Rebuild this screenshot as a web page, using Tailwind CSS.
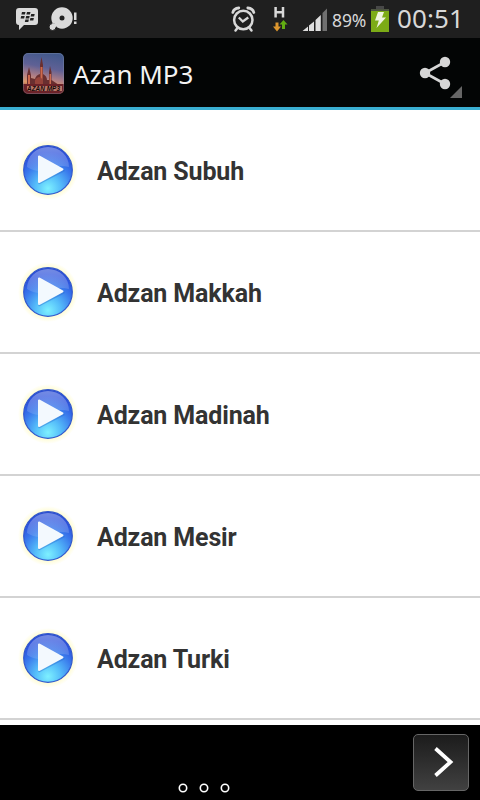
<!DOCTYPE html>
<html lang="id">
<head>
    <meta charset="UTF-8">
    <meta name="viewport" content="width=device-width, initial-scale=1.0">
    <title>Azan MP3</title>
    <script src="https://cdn.jsdelivr.net/npm/@tailwindcss/browser@4"></script>
</head>
<body class="bg-white font-['Roboto',sans-serif]">
    <!-- Shared play icon -->
    <svg class="absolute w-0 h-0" aria-hidden="true">
        <defs>
            <radialGradient id="ball" cx="0.5" cy="0.88" r="0.88">
                <stop offset="0" stop-color="#7df0ff" />
                <stop offset="0.3" stop-color="#55bdfa" />
                <stop offset="0.6" stop-color="#3a7aec" />
                <stop offset="0.85" stop-color="#2a50dc" />
                <stop offset="1" stop-color="#2a4bd0" />
            </radialGradient>
            <linearGradient id="gloss" x1="0" y1="0" x2="0" y2="1">
                <stop offset="0" stop-color="#fff" stop-opacity="0.35" />
                <stop offset="1" stop-color="#fff" stop-opacity="0.12" />
            </linearGradient>
            <radialGradient id="glow">
                <stop offset="0.8" stop-color="#fffccf" />
                <stop offset="1" stop-color="#fffccf" stop-opacity="0" />
            </radialGradient>
        </defs>
        <symbol id="play" viewBox="0 0 60 60">
            <circle cx="30" cy="30" r="30" fill="url(#glow)" />
            <circle cx="30" cy="30" r="24.3" fill="url(#ball)" stroke="#3358cc" stroke-width="1.2" />
            <path d="M9 27a21 20 0 0 1 42 0Q40 24 30 29T9 27z" fill="url(#gloss)" />
            <path d="M21 17v25L45 29.500z" transform="translate(.5 1)" fill="#2868cf" stroke="#2868cf" stroke-width="2.500" stroke-linejoin="round" opacity="0.4" />
            <path d="M21 16.500v25.500L44.500 29.300z" fill="#f3f9fe" stroke="#f3f9fe" stroke-width="2" stroke-linejoin="round" />
        </symbol>
    </svg>

    <div class="w-[480px] h-[800px] flex flex-col overflow-hidden">
        <!-- Status bar -->
        <div class="h-[38px] shrink-0 bg-[#1f1f1f] flex items-start text-[#d8d8d8] font-['Noto_Sans',sans-serif]">
            <svg class="ml-4 w-16 h-[38px]" viewBox="16 0 64 38" fill="#dadada">
                <path d="M19 8h16q3 0 3 3v11q0 3-3 3H24l-5 5v-5q-3 0-3-3V11q0-3 3-3z" />
                <g fill="#222">
                    <path d="M22 12h3.500l-.6 2.500h-3.500zM27 12h3.500l-.6 2.500h-3.500zM21.200 16h3.500l-.6 2.500h-3.500zM26.200 16h3.500l-.6 2.500h-3.500zM31.200 14h3.500l-.6 2.500h-3.500zM30.400 18h3.500l-.6 2.500h-3.500zM25.400 19.600h3.500l-.6 2.400h-3.500z" />
                </g>
                <circle cx="62" cy="18" r="10.700" />
                <circle cx="62" cy="18" r="2.500" fill="#222" />
                <circle cx="52.500" cy="27" r="3.500" stroke="#1f1f1f" stroke-width="1" />
                <path d="M52 23l6 1-3 4z" />
                <path d="M74 12.500h2.500v7.500H74zM74 21.500h2.500V24H74z" />
            </svg>
            <svg class="ml-[150px] w-[100px] h-[38px]" viewBox="230 0 100 38">
                <g fill="none" stroke="#d8d8d8" stroke-linecap="round">
                    <circle cx="243.300" cy="20" r="9.200" stroke-width="2.500" />
                    <path d="M238.800 17.500l4 4 5.500-4" stroke-width="2.300" stroke-linecap="butt" />
                    <path d="M232.800 12.500q1-4 6-4.500M253.800 12.500q-1-4-6-4.500" stroke-width="2.800" />
                    <path d="M237.500 28l-2 2.500M249.500 28l2 2.500" stroke-width="2.500" />
                </g>
                <path d="M275.600 7v10.500M283 7v10.500M275.600 12.200h7.400" stroke="#d8d8d8" stroke-width="2.500" />
                <path d="M275.500 22.500h3v4h2.500l-4 5-4-5h2.500z" fill="#dc962e" />
                <path d="M282 29v-4.500h-2.500l4-4.500 4 4.500H285V29z" fill="#62ac12" />
                <g fill="#dedede">
                    <path d="M302.500 31l5.500-4.500V31zM309 25.500l5-4V31h-5zM315.500 20l5.300-5V31h-5.300z" />
                    <path d="M322.500 13l4.500-4.500V31h-4.500z" fill="#707070" />
                </g>
            </svg>
            <div class="ml-0.5 w-9 h-[38px] leading-[40px] text-[17.5px] tracking-[-0.1px]">89%</div>
            <svg class="ml-[3px] w-[18px] h-[38px]" viewBox="371 0 18 38">
                <path d="M376 6h8v3h-8z" fill="#484848" />
                <path d="M371 9h18v3h-18z" fill="#4d5540" />
                <path d="M371 11h18v21h-18z" fill="#7cab16" />
                <path d="M378 12h6l-2 5.500h4L376.500 28l2.300-7.500H375z" fill="#eef3df" />
            </svg>
            <div class="ml-2 h-[38px] leading-[37px] text-[26px] tracking-[0.1px] whitespace-nowrap">00:51</div>
        </div>

        <!-- Action bar -->
        <div class="h-[72px] shrink-0 bg-[#030505] border-b-[3px] border-[#3aafd2] flex items-center">
            <svg class="ml-[23px] mt-[2px] w-[41px] h-[41px] shrink-0" viewBox="0 0 41 41">
                <defs>
                    <linearGradient id="sky" x1="0.6" y1="0" x2="0.4" y2="1">
                        <stop offset="0" stop-color="#42598c" />
                        <stop offset="0.35" stop-color="#5f6195" />
                        <stop offset="0.6" stop-color="#b07f86" />
                        <stop offset="0.78" stop-color="#df9868" />
                        <stop offset="1" stop-color="#5d2025" />
                    </linearGradient>
                    <clipPath id="tile"><rect width="41" height="41" rx="5" /></clipPath>
                </defs>
                <g clip-path="url(#tile)">
                    <rect width="41" height="41" fill="url(#sky)" />
                    <path d="M4 34V22l2-8 2 8v3l4 1q1-4 5-5v-9l1.500-8 1.500 8v9q4 2 4 6h2V19l1-6 1.500 6v8l6 4v3H3z" fill="#692f30" />
                    <path d="M5 22h2v10H5zM17.500 14h2v14h-2zM26.500 21h1.500v10h-1.500z" fill="#cf6a4d" />
                    <path d="M12 27q4-6 8 0v5h-8z" fill="#96433a" />
                    <path d="M0 31h41v10H0z" fill="#6b2228" />
                    <path d="M4 33h35v5H4z" fill="#b87768" />
                    <text x="4" y="38" textLength="33" lengthAdjust="spacingAndGlyphs" fill="#160909" font-family="Liberation Sans" font-size="7" font-weight="bold" font-style="italic">AZAN MP3</text>
                </g>
                <rect x="0.500" y="0.500" width="40" height="40" rx="5" fill="none" stroke="#8998b0" stroke-opacity="0.350" />
            </svg>
            <h1 class="ml-[9px] mt-[3px] text-[26px] leading-9 text-[#f3f3f3] whitespace-nowrap font-['Noto_Sans',sans-serif]">Azan MP3</h1>
            <svg class="ml-auto mr-[17px] w-[45px] h-[46px] mt-[9px]" viewBox="418 54 45 46">
                <path d="M445 62l-20 11 20 11" fill="none" stroke="#d6d6d6" stroke-width="2.600" />
                <g fill="#d6d6d6">
                    <circle cx="445" cy="62" r="5.200" />
                    <circle cx="425" cy="73" r="5.200" />
                    <circle cx="445" cy="84" r="5.200" />
                </g>
                <path d="M462 86v12h-12z" fill="#666" />
            </svg>
        </div>

        <!-- Track list -->
        <ul class="h-[615px] shrink-0 overflow-hidden bg-white text-[25px] tracking-[-0.15px] font-bold text-[#333]">
            <li class="h-[122px] flex items-center border-b-2 border-[#d3d3d3] pl-[18px]">
                <svg class="w-[60px] h-[60px]"><use href="#play" /></svg>
                <span class="ml-[19px] mt-1">Adzan Subuh</span>
            </li>
            <li class="h-[122px] flex items-center border-b-2 border-[#d3d3d3] pl-[18px]">
                <svg class="w-[60px] h-[60px]"><use href="#play" /></svg>
                <span class="ml-[19px] mt-1">Adzan Makkah</span>
            </li>
            <li class="h-[122px] flex items-center border-b-2 border-[#d3d3d3] pl-[18px]">
                <svg class="w-[60px] h-[60px]"><use href="#play" /></svg>
                <span class="ml-[19px] mt-1">Adzan Madinah</span>
            </li>
            <li class="h-[122px] flex items-center border-b-2 border-[#d3d3d3] pl-[18px]">
                <svg class="w-[60px] h-[60px]"><use href="#play" /></svg>
                <span class="ml-[19px] mt-1">Adzan Mesir</span>
            </li>
            <li class="h-[122px] flex items-center border-b-2 border-[#d3d3d3] pl-[18px]">
                <svg class="w-[60px] h-[60px]"><use href="#play" /></svg>
                <span class="ml-[19px] mt-1">Adzan Turki</span>
            </li>
        </ul>

        <!-- Ad banner -->
        <div class="h-[75px] shrink-0 bg-black flex items-start">
            <svg class="ml-[176px] mt-[56px] w-14 h-[14px]" viewBox="176 781 56 14" fill="none" stroke="#fff" stroke-width="1.600">
                <circle cx="183" cy="788" r="3.700" />
                <circle cx="204" cy="788" r="3.700" />
                <circle cx="225" cy="788" r="3.700" />
            </svg>
            <button class="ml-auto mr-[11px] mt-[9px] w-[56px] h-[57px] rounded-[5px] border border-[#666] bg-linear-to-b from-[#1c1c1c] to-[#414141]">
                <svg class="w-[54px] h-[55px]" viewBox="414 735 54 55" fill="none" stroke="#fff" stroke-width="3.800">
                    <path d="M435.500 748.500l15 13.500-15 13.500" />
                </svg>
            </button>
        </div>
    </div>
</body>
</html>
